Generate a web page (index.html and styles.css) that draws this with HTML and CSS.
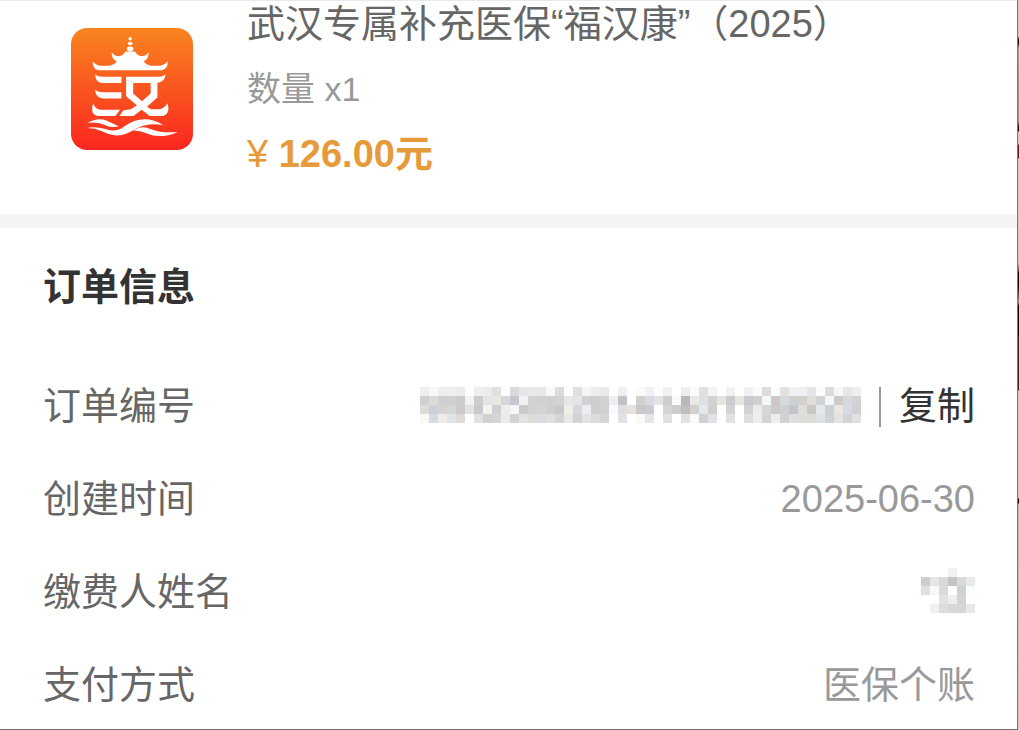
FILE: index.html
```
<!DOCTYPE html>
<html lang="zh-CN">

<head>
    <meta charset="UTF-8">
    <meta name="viewport" content="width=device-width, initial-scale=1">
    <title>订单详情</title>
    <link rel="stylesheet" href="styles.css">
</head>

<body>
    <main>
        <section class="product">
            <svg class="logo" viewBox="34 24 363 363" aria-hidden="true">
                <defs>
                    <linearGradient id="logo-bg" x1="0" y1="0" x2="0" y2="1">
                        <stop offset="0" stop-color="#f9851f" />
                        <stop offset="1" stop-color="#fb261f" />
                    </linearGradient>
                </defs>
                <rect x="34" y="24" width="363" height="363" rx="48" fill="url(#logo-bg)" />
                <g fill="#fff">
                    <circle cx="210" cy="56" r="5" />
                    <ellipse cx="210" cy="70" rx="7" ry="5" />
                    <ellipse cx="210" cy="86" rx="10" ry="7" />
                    <path d="M155 96 Q163 108 176 108 Q190 107 195 95 Q210 91 225 95 Q231 107 244 108 Q257 108 265 96 Q266 116 250 123 Q258 134 272 136 L300 136 Q313 134 321 123 Q325 142 305 150 L115 150 Q96 143 99 123 Q107 134 120 136 L148 136 Q163 134 170 123 Q154 116 155 96Z" />
                    <path d="M106 162 Q113 169 127 169 L184 169 L184 188 L130 188 Q106 187 106 162Z" />
                    <path d="M106 207 Q113 215 127 215 L184 215 L184 234 L130 234 Q106 232 106 207Z" />
                    <path d="M100 248 Q106 265 120 267 L180 267 L166 286 L115 286 Q89 282 100 248Z" />
                    <path fill-rule="evenodd" d="M198 169 L294 169 Q308 169 315 162 Q316 181 291 188 L291 231 L260 258 L272 266 L298 266 Q313 262 321 248 Q331 278 309 286 L268 286 L244 267 L220 286 L178 286 L190 269 L212 266 L230 254 L198 227Z M219 188 L219 219 L245 242 L271 219 L271 188Z" />
                    <path d="M82 307 Q113 289 139 299 L176 316 Q155 323 137 313 Q113 302 82 307Z" />
                    <path d="M79 322 Q104 315 133 324 Q162 334 182 324 Q204 308 222 301 Q266 286 309 313 Q265 305 230 322 Q190 347 164 343 Q145 341 126 331 Q103 321 79 322Z" />
                    <path d="M219 329 Q240 315 264 322 Q296 337 352 334 Q298 355 260 338 Q240 329 219 329Z" />
                </g>
            </svg>
            <div class="product-info">
                <h1>武汉专属补充医保“福汉康”（2025）</h1>
                <p class="quantity">数量 x1</p>
                <p class="price"><span>¥ </span>126.00元</p>
            </div>
        </section>

        <section class="order">
            <h2>订单信息</h2>
            <dl>
                <div class="row">
                    <dt>订单编号</dt>
                    <dd>
                        <svg class="mosaic" data-mask="number" role="img" aria-label="已隐藏"></svg>
                        <span class="separator"></span>
                        <button type="button">复制</button>
                    </dd>
                </div>
                <div class="row">
                    <dt>创建时间</dt>
                    <dd>2025-06-30</dd>
                </div>
                <div class="row">
                    <dt>缴费人姓名</dt>
                    <dd><svg class="mosaic" data-mask="name" role="img" aria-label="已隐藏"></svg></dd>
                </div>
                <div class="row">
                    <dt>支付方式</dt>
                    <dd>医保个账</dd>
                </div>
            </dl>
        </section>
    </main>
    <script src="mosaic.js"></script>
</body>

</html>
```
FILE: styles.css
```
* {
    box-sizing: border-box;
    padding: 0;
    margin: 0;
}

body {
    font-family: "Liberation Sans", "Noto Sans CJK SC", sans-serif;
    font-size: 38px;
    color: #666;
    text-spacing-trim: space-all;
    /* sliver of the window behind, right of the page */
    background: linear-gradient(#ccc 36px, #110508 40px, #110508 43px, #b59a9a 48px, #a58888 122px, #110508 127px, #110508 131px, #ccc 132px, #ccc 144px, #6a1a1c 145px, #6a1a1c 158px, #ccc 159px, #ccc 262px, #8a5550 270px, #000 273px, #000 284px, #4a2818 292px, #999 302px, #000 306px, #000 335px, #38261f 337px, #38261f 390px, #ccc 391px, #ccc 498px, #000 499px, #000 503px, #b4b9bd 504px, #ccc);
}

main {
    margin-right: 1px;
    background: #fff;
    border-right: 1px solid #77777b;
    border-bottom: 1px solid #706c6f;
}

.product {
    display: flex;
    gap: 54px;
    padding: 0 42px 37px 71px;
    border-top: 1px solid #e9e9e9;
    border-bottom: 14px solid #f4f4f4;
}

.logo {
    flex: none;
    width: 122px;
    height: 122px;
    margin-top: 27px;
}

.product-info {
    display: flex;
    flex-direction: column;
    gap: 19px;
    line-height: 46px;
}

h1 {
    font-size: 38px;
    font-weight: normal;
}

.quantity {
    font-size: 34px;
    color: #999;
}

.price {
    font-weight: bold;
    color: #e69a3a;
}

.price span {
    font-weight: normal;
}

.order {
    padding: 30px 42px 17px 43px;
}

h2 {
    font-size: 38px;
    line-height: 58px;
    color: #333;
    margin-bottom: 64px;
}

dl {
    display: grid;
    gap: 40px;
    line-height: 53px;
}

.row {
    display: flex;
    justify-content: space-between;
}

dd {
    display: flex;
    align-items: center;
    gap: 18px;
    color: #999;
}

.mosaic {
    margin-bottom: 4px;
}

.separator {
    width: 2px;
    height: 40px;
    background: #999;
}

button {
    font: inherit;
    color: #333;
    background: none;
    border: none;
    cursor: pointer;
}
```
FILE: mosaic.js
```
// one entry per tile: two digits for a grey, six for a tinted tile
const masks = {
    number: [
        "ee f8 ee ee ec ff ef ec dfe0e2 fd dadadc e4e6e8 ebe9e7 e8e8ea faf9f6 dc fbfffd e0dfdd f3f5f9 efece9 e9eaec ff eef0f2 ff fbfaf7 eff2f6 fd f1 ff efeeec fb e2e0dd f2f4f7 ff f1 ff eef0f3 fbfaf7 dc fafefc e4e2df eef0f3 ef e3e5e9 fcfcfa dcdcda f6f7fa e8e6e3 eceef0",
        "d0 dddad7 cdcfd2 d0 cdcccb f2 cc e4 eae6df d5d7d6 c4c6cc f2 d0d2d1 d0 d0 d4d3cf e6 e3e5e8 d0d1d1 ce d2 eeeff0 c2c3c4 ff d1d0cc d8dbe1 e5e3e1 cdcfce fa bab9b8 ebe9e6 dae0e4 d2 e6e4e1 cacccf e7e5e2 c9cacd d3d0cc f4f6f8 cdc8c6 d5dade cfd1d0 d0 e0dcd8 d2 f4f7f7 cccbc7 d5d8dd d2",
        "dfdcd8 cdd0d6 d3 d5d8d7 cccbca e2 c7c9cc f5f3f0 cdcfd3 efedea f4f6f9 ca d1 d2d4d6 d1cfcd c7c9ca f0ede7 d5d7dc ebedf0 cdcfcd d1 f8faff dddfe1 e7e2de c8c9c8 c8ccd2 ff d5 cccdcd bf d3d1cd e2e9ed cfcfd0 ff d2 ff d2 eeecea d5d7d6 c9cbcd d0 c3c5ca dfddd9 c9c8c4 e2e8ec cdcfd1 ebe8e4 d6dae2 d0",
        "faf8f3 d8dadf f0ece7 dfe4e8 dcdbda ff dfe1e2 d2d1cf d5 eb d3 e0e2e3 dedcd9 dadce0 e1dfdc d4 e7e8e9 d3 e2e3e5 dddbd9 d5 ff e1e2e3 ff fbf9f4 e5e7e9 ff e2e1df ff e4e2e0 fa d2 e0e2e5 ff e2 ff dfdfde efedeb d3 eceef1 d2 dddfe1 e0dcd8 dbdbd8 e0e1e3 d0d3d5 e4e3e1 d6d4d2 e0e1e4"
    ],
    name: [
        "ff ff ff f2 ff ff",
        "cfcecc e5 d9 c4 dad9d8 e9eaec",
        "e2dfdc f8f8fb d9dadc ff d0 fafefd",
        "ff ff e6e1dd eceef0 d1d3d6 ff",
        "ff f1f0ee dc d8 d6 e7e8ea"
    ]
};
const tile = 9;

document.querySelectorAll(".mosaic").forEach(svg => {
    const rows = masks[svg.dataset.mask].map(row => row.split(" "));
    svg.setAttribute("width", rows[0].length * tile);
    svg.setAttribute("height", rows.length * tile);
    rows.forEach((row, y) => {
        row.forEach((tint, x) => {
            const rect = document.createElementNS("http://www.w3.org/2000/svg", "rect");
            rect.setAttribute("x", x * tile);
            rect.setAttribute("y", y * tile);
            rect.setAttribute("width", tile);
            rect.setAttribute("height", tile);
            rect.setAttribute("fill", "#" + (tint.length == 2 ? tint.repeat(3) : tint));
            svg.appendChild(rect);
        });
    });
});
```
